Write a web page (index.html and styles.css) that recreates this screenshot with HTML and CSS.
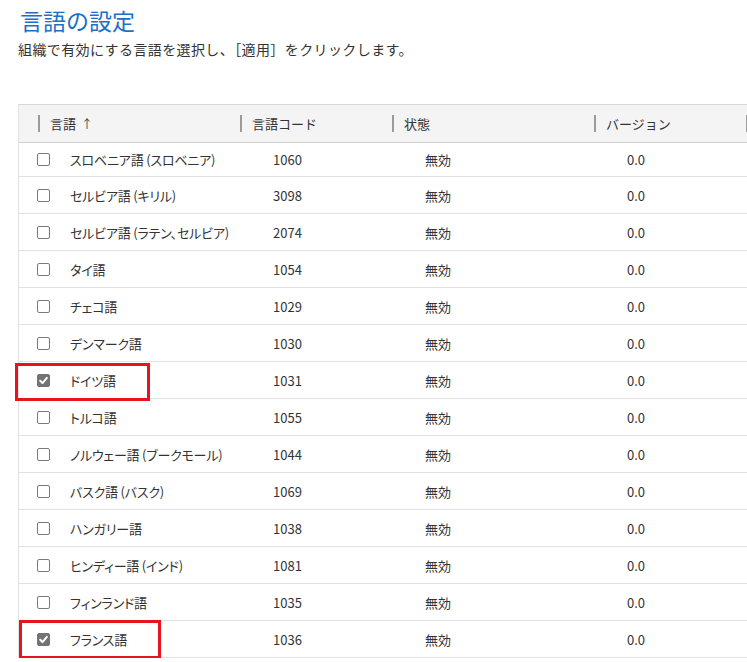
FILE: index.html
```html
<!DOCTYPE html>
<html lang="ja">
<head>
<meta charset="utf-8">
<title>言語の設定</title>
<link rel="stylesheet" href="styles.css">
</head>
<body>
<div class="page">
  <h1 class="title">言語の設定</h1>
  <p class="subtitle">組織で有効にする言語を選択し、［適用］をクリックします。</p>

  <div class="table">
    <div class="thead">
      <div class="hcell hcell-pad"></div>
      <div class="hcell"><span class="sep"></span><span>言語</span><span class="arrow">↑</span></div>
      <div class="hcell"><span class="sep"></span><span>言語コード</span></div>
      <div class="hcell"><span class="sep"></span><span>状態</span></div>
      <div class="hcell"><span class="sep"></span><span>バージョン</span></div>
      <div class="hcell"><span class="sep"></span></div>
    </div>

    <div class="row row-first"><div class="cell name"><span class="cb"></span><span>スロベニア語 (スロベニア)</span></div><div class="cell">1060</div><div class="cell">無効</div><div class="cell">0.0</div></div>
    <div class="row"><div class="cell name"><span class="cb"></span><span>セルビア語 (キリル)</span></div><div class="cell">3098</div><div class="cell">無効</div><div class="cell">0.0</div></div>
    <div class="row"><div class="cell name"><span class="cb"></span><span>セルビア語 (ラテン、セルビア)</span></div><div class="cell">2074</div><div class="cell">無効</div><div class="cell">0.0</div></div>
    <div class="row"><div class="cell name"><span class="cb"></span><span>タイ語</span></div><div class="cell">1054</div><div class="cell">無効</div><div class="cell">0.0</div></div>
    <div class="row"><div class="cell name"><span class="cb"></span><span>チェコ語</span></div><div class="cell">1029</div><div class="cell">無効</div><div class="cell">0.0</div></div>
    <div class="row"><div class="cell name"><span class="cb"></span><span>デンマーク語</span></div><div class="cell">1030</div><div class="cell">無効</div><div class="cell">0.0</div></div>
    <div class="row"><div class="cell name"><span class="cb checked"><svg viewBox="0 0 13 13" width="13" height="13"><path d="M3.2 6.8 L5.5 9.1 L9.9 3.9" fill="none" stroke="#fff" stroke-width="2" stroke-linecap="round" stroke-linejoin="round"/></svg></span><span>ドイツ語</span></div><div class="cell">1031</div><div class="cell">無効</div><div class="cell">0.0</div></div>
    <div class="row"><div class="cell name"><span class="cb"></span><span>トルコ語</span></div><div class="cell">1055</div><div class="cell">無効</div><div class="cell">0.0</div></div>
    <div class="row"><div class="cell name"><span class="cb"></span><span>ノルウェー語 (ブークモール)</span></div><div class="cell">1044</div><div class="cell">無効</div><div class="cell">0.0</div></div>
    <div class="row"><div class="cell name"><span class="cb"></span><span>バスク語 (バスク)</span></div><div class="cell">1069</div><div class="cell">無効</div><div class="cell">0.0</div></div>
    <div class="row"><div class="cell name"><span class="cb"></span><span>ハンガリー語</span></div><div class="cell">1038</div><div class="cell">無効</div><div class="cell">0.0</div></div>
    <div class="row"><div class="cell name"><span class="cb"></span><span>ヒンディー語 (インド)</span></div><div class="cell">1081</div><div class="cell">無効</div><div class="cell">0.0</div></div>
    <div class="row"><div class="cell name"><span class="cb"></span><span>フィンランド語</span></div><div class="cell">1035</div><div class="cell">無効</div><div class="cell">0.0</div></div>
    <div class="row"><div class="cell name"><span class="cb checked"><svg viewBox="0 0 13 13" width="13" height="13"><path d="M3.2 6.8 L5.5 9.1 L9.9 3.9" fill="none" stroke="#fff" stroke-width="2" stroke-linecap="round" stroke-linejoin="round"/></svg></span><span>フランス語</span></div><div class="cell">1036</div><div class="cell">無効</div><div class="cell">0.0</div></div>

    <div class="mark mark-1"></div>
    <div class="mark mark-2"></div>
  </div>
</div>
</body>
</html>
```

FILE: styles.css
```css
html, body {
  margin: 0;
  padding: 0;
  background: #ffffff;
  overflow: hidden;
}

body {
  font-family: "Noto Sans CJK JP", "Noto Sans", sans-serif;
  color: #333333;
}

.page {
  padding-left: 18px;
}

.title {
  margin: 6px 0 0 2px;
  font-size: 23px;
  line-height: 28px;
  font-weight: 400;
  color: #1d6fc6;
}

.subtitle {
  margin: 5px 0 0 0;
  font-size: 14px;
  line-height: 20px;
  letter-spacing: 0.4px;
  color: #333333;
}

.table {
  position: relative;
  margin-top: 45px;
  width: 760px;
  border-left: 1px solid #e2e2e2;
}

.thead {
  display: grid;
  grid-template-columns: 19px 202px 152px 202px 152px 1fr;
  height: 37px;
  background: #f4f4f4;
  border-top: 1px solid #d9d9d9;
  border-bottom: 1px solid #d0d0d0;
}

.hcell {
  display: flex;
  align-items: center;
  gap: 10px;
  font-size: 13px;
  color: #333333;
  white-space: nowrap;
}

.sep {
  width: 2px;
  height: 17px;
  background: #9b9b9b;
}

.arrow {
  margin-left: -5px;
  font-size: 12px;
  color: #444444;
}

.row {
  display: grid;
  grid-template-columns: 221px 152px 202px 152px 1fr;
  height: 36px;
  border-bottom: 1px solid #e1e1e1;
}

.row.row-first {
  height: 33px;
}

.cell {
  display: flex;
  align-items: center;
  padding-left: 33px;
  font-size: 13px;
  color: #333333;
  white-space: nowrap;
  overflow: visible;
}

.cell.name {
  padding-left: 18px;
  gap: 20px;
  font-feature-settings: "palt";
  letter-spacing: -0.2px;
}

.cb {
  box-sizing: border-box;
  width: 13px;
  height: 13px;
  flex: none;
  border: 1px solid #7a7a7a;
  border-radius: 2px;
  background: #ffffff;
  display: flex;
}

.cb.checked {
  background: #737373;
  border-color: #737373;
}

.cb.checked svg {
  margin: -1px;
}

.mark {
  position: absolute;
  box-sizing: border-box;
  border: 3px solid #e8141d;
}

.mark-1 {
  left: -4px;
  top: 259px;
  width: 135px;
  height: 38px;
}

.mark-2 {
  left: 0px;
  top: 516px;
  width: 142px;
  height: 39px;
}
```
